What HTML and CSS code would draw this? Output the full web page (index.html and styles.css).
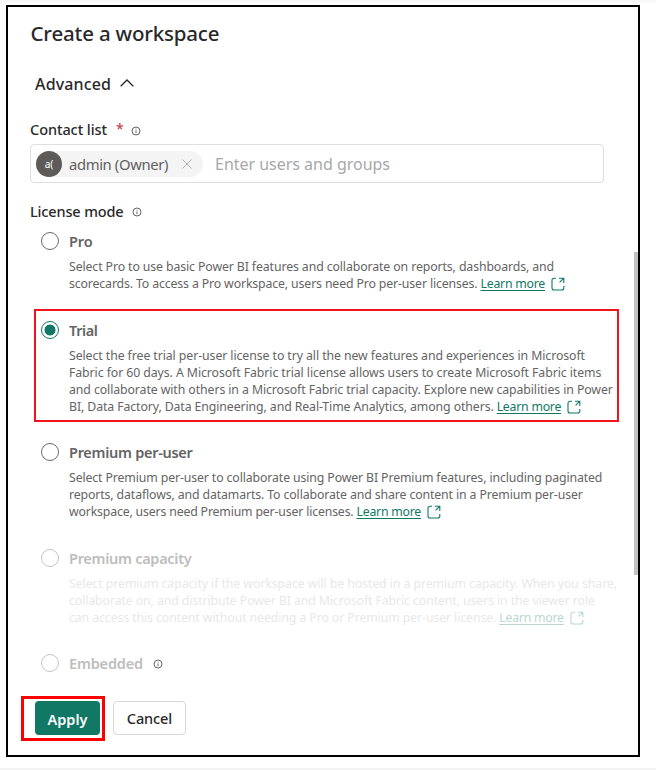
FILE: index.html
```html
<!DOCTYPE html>
<html lang="en">
<head>
<meta charset="utf-8">
<title>Create a workspace</title>
<link rel="stylesheet" href="styles.css">
</head>
<body>
<svg class="defs" width="0" height="0" aria-hidden="true">
<symbol id="info" viewBox="0 0 10 10"><circle cx="5" cy="5" r="4" fill="none" stroke="currentColor" stroke-width=".9"/><path d="M5 4.5V7.2M5 2.8V3.6" stroke="currentColor" stroke-width=".9" fill="none"/></symbol>
<symbol id="open" viewBox="0 0 14 14"><path d="M5 1.2H3A2 2 0 0 0 1 3.2V11A2 2 0 0 0 3 13H10.8A2 2 0 0 0 12.8 11V9M8 1.2H12.8V6M12.8 1.2L8.6 5.4" fill="none" stroke="currentColor" stroke-width="1.1"/></symbol>
</svg>
<main class="dialog">
<h1 class="title">Create a workspace</h1>
<div class="advanced"><span>Advanced</span><svg class="chevron" viewBox="0 0 14 8"><path d="M.7 7.3L7 1L13.3 7.3" fill="none" stroke="currentColor" stroke-width="1.3"/></svg></div>
<div class="label contact"><span>Contact list</span><b class="required">*</b><svg class="info"><use href="#info"/></svg></div>
<div class="field"><div class="chip"><span class="avatar">a(</span><span class="name">admin (Owner)</span><svg class="close" viewBox="0 0 10 10"><path d="M.5 .5L9.5 9.5M9.5 .5L.5 9.5" stroke="currentColor" stroke-width=".9"/></svg></div><span class="placeholder">Enter users and groups</span></div>
<div class="label license"><span>License mode</span><svg class="info"><use href="#info"/></svg></div>
<section class="option pro"><i class="radio"></i><div class="body"><h2>Pro</h2>
<p><span>Select Pro to use basic Power BI features and collaborate on reports, dashboards, and</span></p>
<p><span>scorecards. To access a Pro workspace, users need Pro per-user licenses.</span><a>Learn more</a><svg class="open"><use href="#open"/></svg></p></div></section>
<section class="option trial"><i class="radio checked"></i><div class="body"><h2>Trial</h2>
<p><span>Select the free trial per-user license to try all the new features and experiences in Microsoft</span></p>
<p><span>Fabric for 60 days. A Microsoft Fabric trial license allows users to create Microsoft Fabric items</span></p>
<p><span>and collaborate with others in a Microsoft Fabric trial capacity. Explore new capabilities in Power</span></p>
<p><span>BI, Data Factory, Data Engineering, and Real-Time Analytics, among others.</span><a>Learn more</a><svg class="open"><use href="#open"/></svg></p></div></section>
<section class="option ppu"><i class="radio"></i><div class="body"><h2>Premium per-user</h2>
<p><span>Select Premium per-user to collaborate using Power BI Premium features, including paginated</span></p>
<p><span>reports, dataflows, and datamarts. To collaborate and share content in a Premium per-user</span></p>
<p><span>workspace, users need Premium per-user licenses.</span><a>Learn more</a><svg class="open"><use href="#open"/></svg></p></div></section>
<section class="option capacity disabled"><i class="radio"></i><div class="body"><h2>Premium capacity</h2>
<p><span>Select premium capacity if the workspace will be hosted in a premium capacity. When you share,</span></p>
<p><span>collaborate on, and distribute Power BI and Microsoft Fabric content, users in the viewer role</span></p>
<p><span>can access this content without needing a Pro or Premium per-user license.</span><a>Learn more</a><svg class="open"><use href="#open"/></svg></p></div></section>
<section class="option embedded disabled"><i class="radio"></i><div class="body"><h2>Embedded<svg class="info"><use href="#info"/></svg></h2></div></section>
<footer class="actions"><div class="apply-frame"><button class="apply">Apply</button></div><button class="cancel">Cancel</button></footer>
<div class="scrollbar"></div>
</main>
</body>
</html>
```
FILE: styles.css
```css
*, *::before { box-sizing: border-box; }
body { margin: 0; width: 656px; height: 770px; background: linear-gradient(#f7f7f7, #fff 5px, #fff 768px, #f3f3f3 768px); font-family: "Noto Sans", "Open Sans", sans-serif; color: #292929; padding: 5px 0 0 6px; overflow: hidden; }
.defs { position: absolute; }
.dialog { position: relative; width: 634px; height: 752px; border: 2px solid #000; background: #fff; padding: 0 0 0 22px; display: flex; flex-direction: column; }
span, a, h1, h2 { white-space: nowrap; }
svg { flex: none; }
.title { margin: 10px 0 0 .5px; height: 32px; font-size: 20.5px; line-height: 32px; font-weight: 500; letter-spacing: -.19px; }
.advanced { display: flex; align-items: center; gap: 9px; height: 24px; margin: 23px 0 0 5px; font-size: 16px; line-height: 24px; font-weight: 500; letter-spacing: .15px; }
.chevron { width: 14px; height: 8px; margin-top: -3px; }
.label { display: flex; align-items: center; height: 20px; font-size: 14.5px; line-height: 20px; font-weight: 500; letter-spacing: -.08px; }
.contact { margin-top: 23px; }
.required { margin: 0 7px 0 9px; color: #c4314b; font-weight: 400; font-size: 14px; }
.info { width: 10px; height: 10px; color: #555; margin-top: 3px; }
.field { display: flex; align-items: center; width: 574px; height: 39px; margin-top: 5px; border: 1px solid #dedede; border-radius: 4px; padding-left: 5px; }
.chip { display: flex; align-items: center; width: 167px; height: 26px; border-radius: 13px; background: #f4f4f4; }
.avatar { width: 26px; height: 26px; border-radius: 50%; background: #5d5b59; color: #fff; font-size: 10px; line-height: 26px; text-align: center; }
.name { margin-left: 7px; font-size: 14.8px; line-height: 26px; color: #616161; letter-spacing: -.363px; }
.close { width: 10px; height: 10px; margin-left: 14px; color: #aaa; }
.placeholder { margin-left: 12px; padding-top: 1px; font-size: 16px; line-height: 26px; color: #a8a8a8; letter-spacing: -.02px; }
.license { margin-top: 18px; letter-spacing: -.146px; }
.license .info { margin: 1px 0 0 9px; }
.option { position: relative; display: flex; gap: 11px; width: 589px; margin-left: 11px; flex: none; color: #646464; }
.radio { width: 18px; height: 18px; border: 1px solid #6a6a6a; border-radius: 50%; flex: none; margin: 1px -1px 0 0; }
.checked { border-color: #117865; background: radial-gradient(circle, #117865 5.2px, transparent 5.8px); }
h2 { display: flex; align-items: center; margin: 0 0 6.5px; height: 20px; font-size: 14.5px; line-height: 20px; font-weight: 600; letter-spacing: -.28px; }
.pro h2 { letter-spacing: -.12px; }
.trial h2 { letter-spacing: -.4px; }
.embedded h2 { letter-spacing: -.16px; }
p { display: flex; align-items: center; margin: 0; height: 17.15px; font-size: 12.3px; line-height: 17.15px; letter-spacing: -.08px; }
.pro p { letter-spacing: -.108px; }
.pro p:last-child { letter-spacing: -.132px; }
.trial p:last-child { letter-spacing: -.1px; }
.trial p:nth-of-type(3) { letter-spacing: -.09px; }
.ppu p { letter-spacing: -.12px; }
.ppu p:last-child { letter-spacing: -.166px; }
.capacity p { letter-spacing: -.094px; }
.capacity h2 + p { letter-spacing: -.075px; }
p a { margin-left: 3px; color: #117865; text-decoration: underline; text-underline-offset: 1.5px; letter-spacing: -.236px; }
.open { width: 14px; height: 14px; margin: 2px 0 0 6px; color: #117865; }
.pro { margin-top: 10px; height: 79px; }
.trial { margin-top: 10px; height: 122px; }
.trial::before { content: ""; position: absolute; left: -7px; top: -11px; width: 585px; height: 113px; border: 2px solid #f0141e; }
.ppu { height: 106px; }
.capacity { height: 105px; }
.disabled { color: #bdbdbd; }
.disabled .radio { border-color: #c4c4c4; }
.disabled p { color: #e8e8e8; }
.disabled a, .disabled .open { color: #b8d7d1; }
.embedded { height: 43px; }
.embedded .info { margin: 1px 0 0 10px; }
.actions { display: flex; align-items: flex-start; gap: 8px; height: 45px; margin-left: -9px; }
.apply-frame { width: 84px; height: 45px; border: 3px solid #f00; padding: 2px 0 0 11px; }
button { height: 34px; border-radius: 4px; font: 600 14.5px/32px "Noto Sans", "Open Sans", sans-serif; padding: 2px 0 0; }
.apply { display: block; width: 65px; background: #117865; color: #fff; border: 0; }
.cancel { width: 73px; margin-top: 5px; padding: 0; background: #fff; border: 1px solid #d8d8d8; color: #292929; letter-spacing: -.1px; font-weight: 500; }
.scrollbar { position: absolute; left: 626px; top: 245px; width: 4px; height: 323px; background: #c2c2c2; }
```
